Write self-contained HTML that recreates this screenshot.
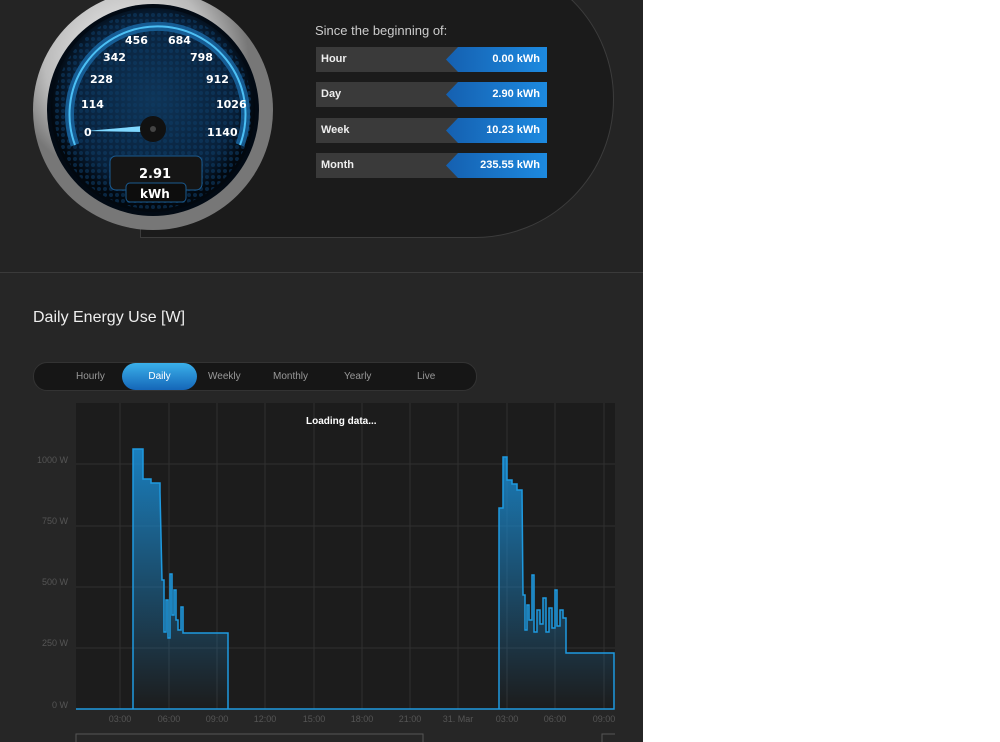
<!DOCTYPE html>
<html><head><style>
body{margin:0;width:1000px;height:742px;background:#fff;overflow:hidden;font-family:"Liberation Sans",sans-serif;}
#wrap{position:absolute;left:0;top:0;width:643px;height:742px;background:#252525;overflow:hidden}
#top{position:absolute;left:0;top:0;width:643px;height:272px;background:#242424;border-bottom:1px solid #3a3a3a}
#pill{position:absolute;left:140px;top:-40px;width:472px;height:276px;border-radius:0 140px 140px 0;background:#1b1b1b;border:1px solid #3c3c3c}
.row{position:absolute;left:316px;width:231px;height:25px;background:#3a3a3a;color:#eee;font-size:11px;font-weight:bold}
.row .l{position:absolute;left:5px;top:6px}
.row .v{position:absolute;right:0;top:0;width:101px;height:25px;background:linear-gradient(90deg,#1560b0,#1d8ae0);clip-path:polygon(12px 0,100% 0,100% 100%,12px 100%,0 50%);text-align:right;box-sizing:border-box;padding:6px 7px 0 0;color:#fff}
.gl{position:absolute;color:#fff;font-size:11px;font-weight:bold;font-family:"DejaVu Sans",sans-serif}
#bot{position:absolute;left:0;top:273px;width:643px;height:469px;background:#262626}
h2{position:absolute;left:33px;top:309px;margin:0;color:#eee;font-weight:normal;font-size:16px}
#tabs{position:absolute;left:33px;top:362px;width:442px;height:27px;border-radius:14px;background:#161616;border:1px solid #333}
.t{position:absolute;top:8px;color:#999;font-size:10px}
#daily{position:absolute;left:88px;top:0;width:75px;height:27px;border-radius:14px;background:linear-gradient(#3ab0ea,#1566b8);color:#fff;font-size:10px;text-align:center;line-height:27px}
</style></head><body><div id="wrap">
<div id="top">
<div id="pill"></div>
<svg style="position:absolute;left:0;top:0" width="310" height="250">
<defs>
<radialGradient id="ring" cx="40%" cy="30%"><stop offset="0" stop-color="#fafafa"/><stop offset="0.7" stop-color="#bbb"/><stop offset="1" stop-color="#777"/></radialGradient>
<radialGradient id="face" cx="50%" cy="45%"><stop offset="0" stop-color="#0f3558"/><stop offset="0.8" stop-color="#08203a"/><stop offset="1" stop-color="#02080f"/></radialGradient>
<pattern id="hex" width="6" height="6" patternUnits="userSpaceOnUse"><circle cx="3" cy="3" r="2" fill="#0e3a63" opacity=".6"/></pattern>
</defs>
<circle cx="153" cy="110" r="120" fill="url(#ring)"/>
<circle cx="153" cy="110" r="106" fill="#020a14"/>
<circle cx="153" cy="110" r="102" fill="url(#face)"/>
<circle cx="153" cy="110" r="99" fill="url(#hex)"/>
<path d="M75 145 A88 88 0 1 1 240 145" fill="none" stroke="#1a6aa8" stroke-width="9" opacity=".8"/>
<path d="M75 145 A88 88 0 1 1 240 145" fill="none" stroke="#4cc0f5" stroke-width="2"/>
<polygon points="86,131 143,126 143,132" fill="#7fd8ff"/>
<circle cx="153" cy="129" r="13" fill="#111"/><circle cx="153" cy="129" r="3" fill="#444"/>
<rect x="110" y="156" width="92" height="34" rx="6" fill="#151515" stroke="#1a5a90"/>
<rect x="126" y="183" width="60" height="19" rx="4" fill="#0d0d0d" stroke="#1a5a90"/>
</svg>
<div class="gl" style="left:125px;top:34px">456</div><div class="gl" style="left:168px;top:34px">684</div>
<div class="gl" style="left:103px;top:51px">342</div><div class="gl" style="left:190px;top:51px">798</div>
<div class="gl" style="left:90px;top:73px">228</div><div class="gl" style="left:206px;top:73px">912</div>
<div class="gl" style="left:81px;top:98px">114</div><div class="gl" style="left:216px;top:98px">1026</div>
<div class="gl" style="left:84px;top:126px">0</div><div class="gl" style="left:207px;top:126px">1140</div>
<div class="gl" style="left:139px;top:167px;font-size:13px">2.91</div>
<div class="gl" style="left:140px;top:187px;font-size:12px">kWh</div>
<div style="position:absolute;left:315px;top:23px;color:#ccc;font-size:13px">Since the beginning of:</div>
<div class="row" style="top:47px"><span class="l">Hour</span><div class="v">0.00 kWh</div></div>
<div class="row" style="top:82px"><span class="l">Day</span><div class="v">2.90 kWh</div></div>
<div class="row" style="top:118px"><span class="l">Week</span><div class="v">10.23 kWh</div></div>
<div class="row" style="top:153px"><span class="l">Month</span><div class="v">235.55 kWh</div></div>
</div>
<div id="bot"></div>
<h2>Daily Energy Use [W]</h2>
<div id="tabs"><span class="t" style="left:42px">Hourly</span><div id="daily">Daily</div><span class="t" style="left:174px">Weekly</span><span class="t" style="left:239px">Monthly</span><span class="t" style="left:310px">Yearly</span><span class="t" style="left:383px">Live</span></div>
<svg style="position:absolute;left:0;top:400px" width="643" height="342" font-family="Liberation Sans" font-size="9" fill="#555">
<defs><linearGradient id="ar" x1="0" y1="0" x2="0" y2="1"><stop offset="0" stop-color="#1a8ad0" stop-opacity=".9"/><stop offset="1" stop-color="#1a8ad0" stop-opacity="0"/></linearGradient></defs>
<rect x="76" y="3" width="539" height="306" fill="#1c1c1c"/>
<g stroke="#303030" stroke-width="1">
<line x1="76" x2="615" y1="64" y2="64"/><line x1="76" x2="615" y1="126" y2="126"/><line x1="76" x2="615" y1="187" y2="187"/><line x1="76" x2="615" y1="248" y2="248"/>
<line x1="120" x2="120" y1="3" y2="309"/><line x1="169" x2="169" y1="3" y2="309"/><line x1="217" x2="217" y1="3" y2="309"/><line x1="265" x2="265" y1="3" y2="309"/><line x1="314" x2="314" y1="3" y2="309"/><line x1="362" x2="362" y1="3" y2="309"/><line x1="410" x2="410" y1="3" y2="309"/><line x1="458" x2="458" y1="3" y2="309"/><line x1="507" x2="507" y1="3" y2="309"/><line x1="555" x2="555" y1="3" y2="309"/><line x1="604" x2="604" y1="3" y2="309"/>
</g>
<path d="M76 309 H133 V49 H143 V79 H151 V83 H160 V92 L162 180 H164 V232 H166 V200 H168 V238 H170 V174 H172 V215 H174 V190 H176 V220 H178 V230 H181 V207 H183 V233 H187 V233 H228 V309 H499 V108 H503 V57 H507 V80 H512 V84 H517 V90 H522 L523 195 H525 V230 H527 V205 H529 V220 H532 V175 H534 V232 H537 V210 H540 V224 H543 V198 H546 V232 H549 V208 H552 V228 H555 V190 H557 V226 H560 V210 H563 V218 H566 V253 H614 V309 Z" fill="url(#ar)" stroke="#1e9ae0" stroke-width="1.5"/>
<text x="306" y="24" fill="#fff" font-weight="bold" font-size="10">Loading data...</text>
<g text-anchor="end"><text x="68" y="63">1000 W</text><text x="68" y="124">750 W</text><text x="68" y="185">500 W</text><text x="68" y="246">250 W</text><text x="68" y="308">0 W</text></g>
<g text-anchor="middle"><text x="120" y="322">03:00</text><text x="169" y="322">06:00</text><text x="217" y="322">09:00</text><text x="265" y="322">12:00</text><text x="314" y="322">15:00</text><text x="362" y="322">18:00</text><text x="410" y="322">21:00</text><text x="458" y="322">31. Mar</text><text x="507" y="322">03:00</text><text x="555" y="322">06:00</text><text x="604" y="322">09:00</text></g>
<path d="M76 342 V334 H423 V342" fill="none" stroke="#555"/>
<path d="M602 342 V334 H615" fill="none" stroke="#555"/>
</svg>
</div></body></html>
